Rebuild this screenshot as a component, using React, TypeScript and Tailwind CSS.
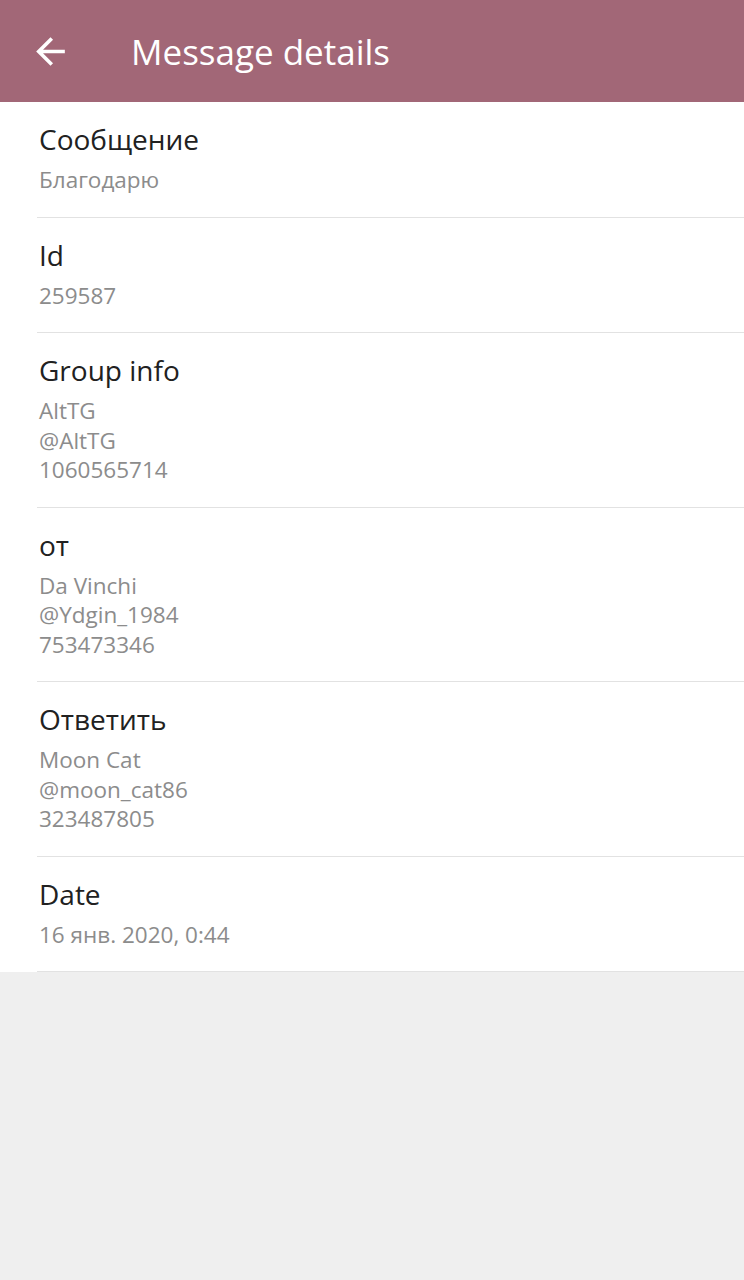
type Detail = {
  title: string
  lines: string[]
}

const details: Detail[] = [
  { title: 'Сообщение', lines: ['Благодарю'] },
  { title: 'Id', lines: ['259587'] },
  { title: 'Group info', lines: ['AltTG', '@AltTG', '1060565714'] },
  { title: 'от', lines: ['Da Vinchi', '@Ydgin_1984', '753473346'] },
  { title: 'Ответить', lines: ['Moon Cat', '@moon_cat86', '323487805'] },
  { title: 'Date', lines: ['16 янв. 2020, 0:44'] },
]

// material "arrow_back"
const BackArrow = () => (
  <svg width="43" height="43" viewBox="0 0 24 24" fill="currentColor">
    <path d="M20 11H7.83l5.59-5.59L12 4l-8 8 8 8 1.41-1.41L7.83 13H20v-2z" />
  </svg>
)

const DetailRow = ({ title, lines }: Detail) => (
  <div className="pl-[37px]">
    <div className="border-b border-[#e2e2e2] pb-[22px] pl-[2px] pt-[19px]">
      <div className="text-[28px] leading-[36px] text-[#212121]">{title}</div>
      <div className="mt-2 text-[22.5px] leading-[29.5px] text-[#8c8c8c]">
        {lines.map((line) => (
          <div key={line}>{line}</div>
        ))}
      </div>
    </div>
  </div>
)

const App = () => {
  return (
    <div
      className="flex min-h-screen flex-col bg-[#efefef]"
      style={{ fontFamily: '"Open Sans", "Noto Sans", sans-serif' }}
    >
      <header className="flex h-[102px] items-center bg-[#a26777] text-white shadow-[0_1px_2px_rgba(0,0,0,0.15)]">
        <div className="flex w-[131px] items-center pl-[29px]">
          <BackArrow />
        </div>
        <h1 className="text-[35px] leading-none">Message details</h1>
      </header>

      <main className="bg-white">
        {details.map((d) => (
          <DetailRow key={d.title} {...d} />
        ))}
      </main>
    </div>
  )
}

export default App
